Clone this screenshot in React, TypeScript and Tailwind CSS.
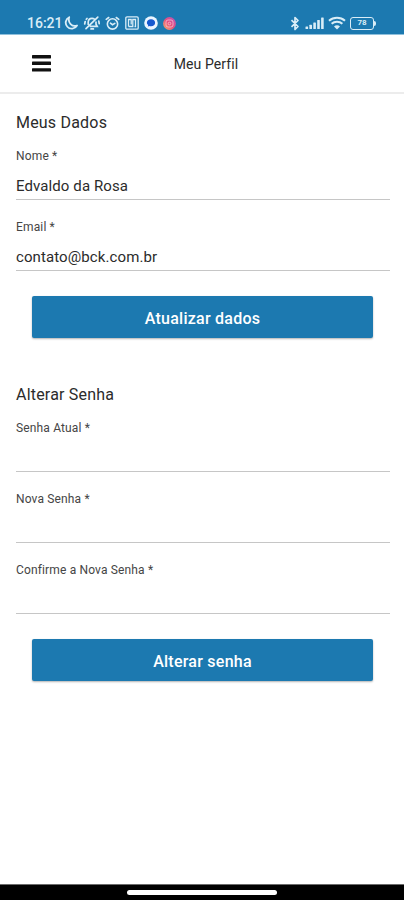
import { useState } from 'react';

interface FieldProps {
  label: string;
  type?: string;
  value: string;
  onChange: (value: string) => void;
}

export default function App() {
  const [name, setName] = useState('Edvaldo da Rosa');
  const [email, setEmail] = useState('contato@bck.com.br');
  const [current, setCurrent] = useState('');
  const [next, setNext] = useState('');
  const [confirm, setConfirm] = useState('');

  return (
    <div className="flex h-[900px] w-[404px] flex-col overflow-hidden bg-white font-['Roboto',sans-serif] text-[#2b2b2b]">
      <StatusBar />
      <header className="flex h-[59px] shrink-0 items-center border-b-2 border-[#ececec] px-8">
        <button type="button" aria-label="Menu" className="w-[19px]">
          <svg viewBox="0 0 19 17" className="block h-[17px] w-[19px]" fill="#111">
            <rect y="0" width="19" height="3.4" rx="0.6" />
            <rect y="6.6" width="19" height="3.4" rx="0.6" />
            <rect y="13.2" width="19" height="3.4" rx="0.6" />
          </svg>
        </button>
        <h1 className="mr-[11px] flex-1 pt-px text-center text-sm tracking-[0.1px]">Meu Perfil</h1>
      </header>

      <main className="flex-1 pt-[18px] pr-[14px] pl-4">
        <form onSubmit={(e) => e.preventDefault()}>
          <SectionTitle>Meus Dados</SectionTitle>
          <div className="flex flex-col gap-[19px]">
            <Field label="Nome *" value={name} onChange={setName} />
            <Field label="Email *" type="email" value={email} onChange={setEmail} />
          </div>
          <SubmitButton>Atualizar dados</SubmitButton>
        </form>

        <form className="mt-[46px]" onSubmit={(e) => e.preventDefault()}>
          <SectionTitle>Alterar Senha</SectionTitle>
          <div className="flex flex-col gap-[19px]">
            <Field label="Senha Atual *" type="password" value={current} onChange={setCurrent} />
            <Field label="Nova Senha *" type="password" value={next} onChange={setNext} />
            <Field
              label="Confirme a Nova Senha *"
              type="password"
              value={confirm}
              onChange={setConfirm}
            />
          </div>
          <SubmitButton>Alterar senha</SubmitButton>
        </form>
      </main>

      <footer className="flex h-4 shrink-0 justify-center border-t border-[#6b6b6b] bg-black pt-[5px]">
        <div className="h-[5px] w-[150px] rounded-full bg-white" />
      </footer>
    </div>
  );
}

function SectionTitle({ children }: { children: string }) {
  return <h2 className="mb-[15px] pt-px text-base leading-5 tracking-[0.2px]">{children}</h2>;
}

function Field({ label, type = 'text', value, onChange }: FieldProps) {
  return (
    <label className="block h-[52px]">
      <span className="block text-xs leading-4 tracking-[0.15px] text-[#454545]">{label}</span>
      <input
        type={type}
        value={value}
        onChange={(e) => onChange(e.target.value)}
        className="block h-9 w-full border-b border-[#c6c6c6] pt-2 text-[15px] tracking-[0.1px] outline-none"
      />
    </label>
  );
}

function SubmitButton({ children }: { children: string }) {
  return (
    <button
      type="submit"
      className="mx-4 mt-[25px] block h-[42px] w-[341px] rounded-[2px] bg-[#1c79b0] pt-[3px] text-base font-medium tracking-[0.25px] text-white shadow-[0_1px_2px_rgba(0,0,0,0.3)]"
    >
      {children}
    </button>
  );
}

function StatusBar() {
  return (
    <div className="flex h-[35px] shrink-0 items-start justify-between border-b border-[#8fc0dc] bg-[#1c79b0] pt-[15px] pr-7 pl-[27px] text-[#d9edf7]">
      <div className="flex h-4 items-center">
        <span className="w-[37px] text-sm font-medium">16:21</span>
        <svg viewBox="0 0 14 14" className="h-[14px] w-[14px]" fill="none" stroke="currentColor" strokeWidth="1.8" strokeLinejoin="round">
          <path d="M5.2 1.2a6 6 0 1 0 7.8 8.3C8 11.3 3.5 6.6 5.2 1.2z" />
        </svg>
        {/* muted, ringing bell */}
        <svg viewBox="0 0 18 16" className="ml-[5px] h-4 w-[18px]" fill="none" stroke="currentColor" strokeWidth="1.7" strokeLinecap="round">
          <path d="M5.2 9.2V7C5.4 4.5 7 3.4 9 3.4c.9 0 1.7.2 2.4.8M13 7v2.200l1.200 2.200H7.600M8 13.900h2.400M14.800 2.200 3 13.600M2.200 6.500 1.700 9M4 3.500l-.7.8M15.800 6.200l.4 2.500M7.200 9.500 12 5" />
        </svg>
        <svg viewBox="0 0 16 16" className="ml-1 h-[15px] w-[15px]" fill="none" stroke="currentColor" strokeWidth="1.7" strokeLinecap="round">
          <circle cx="8" cy="8.5" r="5.5" />
          <path d="M1.300 3.600 4 1.600M14.700 3.600 12 1.600M5.800 7.600 8 9.300l2.500-1.500" />
        </svg>
        <svg viewBox="0 0 14 14" className="ml-[5px] h-[14px] w-[14px]" fill="none" stroke="currentColor" strokeWidth="1.3">
          <rect x="0.8" y="0.8" width="12.4" height="12.4" rx="1.2" />
          <path d="M3.500 10.500V3.500h2.700v5M3.500 10.500h4.300v-7h2.700v7H9.500" />
        </svg>
        <svg viewBox="0 0 14 14" className="ml-[5px] h-[14px] w-[14px]">
          <circle cx="7" cy="7" r="6.8" fill="#eaf5ff" />
          <path d="M7 3.300c2.500 0 4.100 1.400 4.100 3.400S9.500 10.300 7 10.300c-.5 0-1-.1-1.500-.2l-1.700.4.400-1.500C3.300 8.400 2.900 7.600 2.900 6.700 2.900 4.700 4.500 3.300 7 3.300z" fill="#1559cf" />
        </svg>
        <svg viewBox="0 0 13 13" className="ml-[5px] h-[13px] w-[13px]">
          <defs>
            <linearGradient id="camera" x1="0" y1="1" x2="1" y2="0">
              <stop offset="0" stopColor="#f8b067" />
              <stop offset="0.5" stopColor="#e4507f" />
              <stop offset="1" stopColor="#b455c0" />
            </linearGradient>
          </defs>
          <circle cx="6.5" cy="6.5" r="6.4" fill="url(#camera)" />
          <g fill="none" stroke="#ffc9d6" strokeWidth="0.7">
            <rect x="3" y="3" width="7" height="7" rx="2" />
            <circle cx="6.5" cy="6.5" r="1.300" />
          </g>
        </svg>
      </div>

      <div className="flex h-4 items-center">
        <svg viewBox="0 0 10 15" className="h-[15px] w-[10px]" fill="none" stroke="currentColor" strokeWidth="1.7" strokeLinejoin="round">
          <path d="M1.500 4.200 8 10.500 5 13.500v-12l3 3-6.500 6.300" />
        </svg>
        <svg viewBox="0 0 19 12" className="ml-[5px] h-3 w-[19px]" fill="currentColor">
          <rect x="0.5" y="9.5" width="2.6" height="2.5" rx="0.5" />
          <rect x="4.4" y="7.8" width="2.6" height="4.2" rx="0.5" />
          <rect x="8.3" y="5.5" width="2.6" height="6.5" rx="0.5" />
          <rect x="12.2" y="3" width="2.6" height="9" rx="0.5" />
          <rect x="16.1" y="0.5" width="2.6" height="11.5" rx="0.5" />
        </svg>
        <svg viewBox="0 0 18 14" className="ml-1 h-[14px] w-[18px]" fill="none" stroke="currentColor" strokeWidth="2">
          <path d="M1 4.800c4.500-4 11.500-4 16 0M3.600 7.800c3-2.700 7.800-2.700 10.800 0" />
          <path d="M6 10.400c1.800-1.500 4.200-1.500 6 0l-3 3z" fill="currentColor" stroke="none" />
        </svg>
        <div className="ml-1 flex items-center">
          <div className="flex h-[13px] w-6 items-center justify-center rounded-[3px] border-[1.5px] border-[#d9edf7] text-[8px] leading-none font-bold">
            78
          </div>
          <div className="h-[5px] w-[2px] rounded-r-sm bg-[#d9edf7]" />
        </div>
      </div>
    </div>
  );
}
